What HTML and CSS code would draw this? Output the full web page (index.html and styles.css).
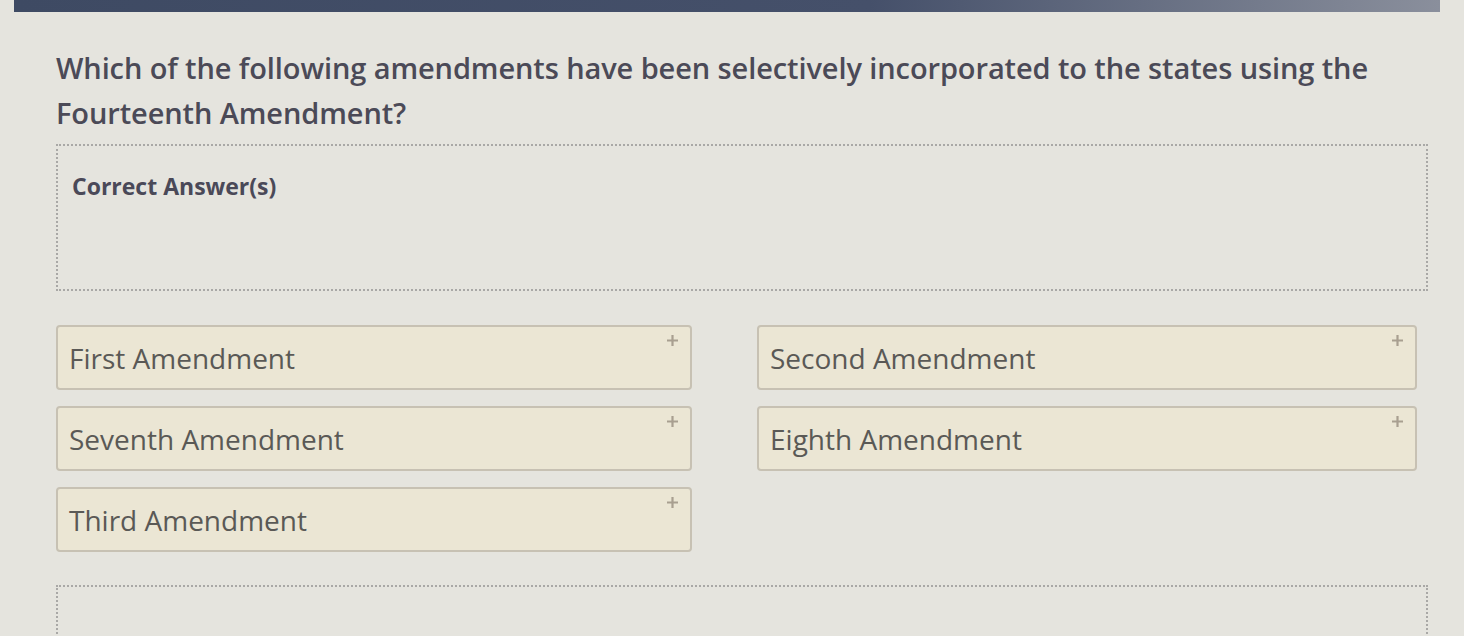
FILE: index.html
```html
<!DOCTYPE html>
<html>
<head>
<meta charset="utf-8">
<link rel="stylesheet" href="styles.css">
</head>
<body>
<div class="topbar"></div>
<main class="page">
  <h1 class="question">Which of the following amendments have been selectively incorporated to the states using the Fourteenth Amendment?</h1>
  <section class="dropzone">
    <div class="dropzone-title">Correct Answer(s)</div>
  </section>
  <div class="options">
    <div class="option"><span>First Amendment</span><svg class="plus" viewBox="0 0 10 10"><path d="M5 0V10M0 5H10"/></svg></div>
    <div class="option"><span>Second Amendment</span><svg class="plus" viewBox="0 0 10 10"><path d="M5 0V10M0 5H10"/></svg></div>
    <div class="option"><span>Seventh Amendment</span><svg class="plus" viewBox="0 0 10 10"><path d="M5 0V10M0 5H10"/></svg></div>
    <div class="option"><span>Eighth Amendment</span><svg class="plus" viewBox="0 0 10 10"><path d="M5 0V10M0 5H10"/></svg></div>
    <div class="option"><span>Third Amendment</span><svg class="plus" viewBox="0 0 10 10"><path d="M5 0V10M0 5H10"/></svg></div>
  </div>
  <section class="dropzone bottom"></section>
</main>
</body>
</html>
```
FILE: styles.css
```css
html, body {
  margin: 0;
  padding: 0;
  background: #e5e4de;
  height: 636px;
  overflow: hidden;
}
.topbar {
  height: 12px;
  margin: 0 24px 0 14px;
  background: linear-gradient(90deg, #3e4a63 0%, #45506a 60%, #8a8f9c 100%);
}
.page {
  padding: 33px 36px 0 56px;
  font-family: "Open Sans", "Liberation Sans", sans-serif;
}
.question {
  margin: 0;
  max-width: 1340px;
  font-size: 29px;
  font-weight: 600;
  line-height: 45px;
  color: #4b4a57;
  letter-spacing: -0.1px;
}
.dropzone {
  margin-top: 9px;
  height: 147px;
  border: 2px dotted #a9a8a6;
  box-sizing: border-box;
  padding: 24px 14px;
}
.dropzone-title {
  font-size: 23px;
  font-weight: 700;
  color: #4a4958;
}
.options {
  margin-top: 34px;
  display: grid;
  grid-template-columns: 636px 660px;
  column-gap: 65px;
  row-gap: 16px;
}
.option {
  height: 65px;
  box-sizing: border-box;
  border: 2px solid #c7c1b3;
  border-radius: 4px;
  background: #ebe6d4;
  display: flex;
  align-items: center;
  justify-content: space-between;
  padding: 0 12px 0 11px;
  font-size: 28px;
  color: #5a5956;
}
.plus {
  align-self: flex-start;
  margin-top: 8px;
  width: 11px;
  height: 11px;
  fill: none;
  stroke: #a89f90;
  stroke-width: 2;
}
.dropzone.bottom {
  margin-top: 33px;
  height: 80px;
  padding: 0;
}
```
